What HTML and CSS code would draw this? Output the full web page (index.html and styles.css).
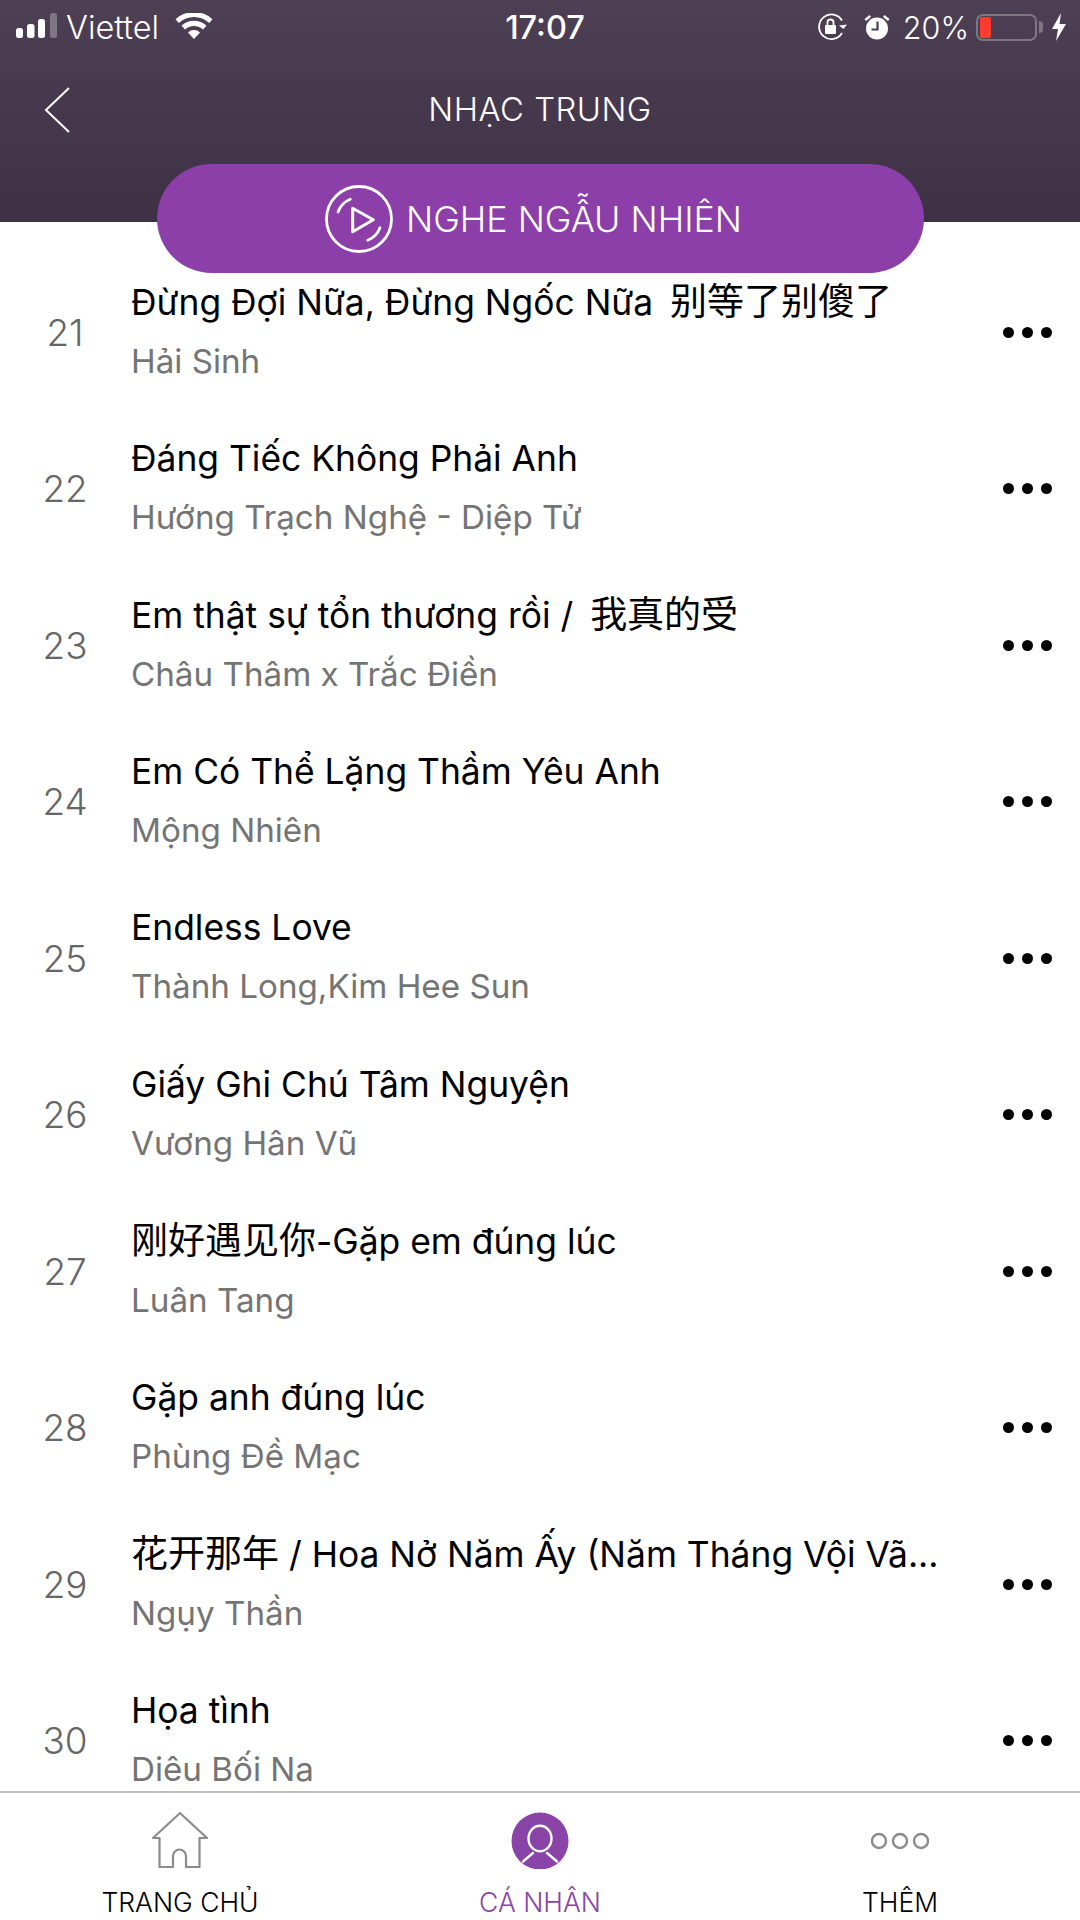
FILE: index.html
```html
<!DOCTYPE html>
<html lang="vi">
<head>
<meta charset="utf-8">
<title>Nhạc Trung</title>
<link rel="stylesheet" href="styles.css">
</head>
<body>
<div class="screen">
  <header class="header">
    <div class="status">
      <div class="status-left">
        <svg class="signal" width="44" height="28" viewBox="0 0 44 28"><rect x="1" y="15" width="7" height="10" rx="2.500" fill="#fff"/><rect x="12" y="11" width="7.500" height="14" rx="2.500" fill="#fff"/><rect x="23" y="6" width="7" height="19" rx="2.500" fill="#fff"/><rect x="35" y="0" width="7" height="25" rx="2.500" fill="#7e7685"/></svg>
        <span class="carrier">Viettel</span>
        <svg class="wifi" width="38" height="28" viewBox="0 0 38 28"><path d="M19 26l-6-6.500a8.500 8.500 0 0 1 12 0zM10 16.500l-3.500-3.800a18 18 0 0 1 25 0L28 16.500a13 13 0 0 0-18 0zM3.800 10L0.500 6.300a27 27 0 0 1 37 0L34.200 10a22 22 0 0 0-30.400 0z" fill="#fff"/></svg>
      </div>
      <span class="time">17:07</span>
      <div class="status-right">
        <svg width="30" height="28" viewBox="0 0 30 28" fill="none"><path d="M25 7.500A12.300 12.300 0 1 0 25 20" stroke="#fff" stroke-width="1.800"/><path d="M22 12.500l4.500 3.500 3.500-4.500z" fill="#fff"/><rect x="8" y="12" width="11" height="9" rx="1" fill="#fff"/><path d="M10.500 12V9.500a3 3 0 0 1 6 0V12" stroke="#fff" stroke-width="1.800"/></svg>
        <svg class="alarm" width="26" height="28" viewBox="0 0 26 28"><circle cx="13" cy="15.500" r="11" fill="#fff"/><path d="M0.500 6l5-4 1.500 2-5 4zM25.500 6l-5-4-1.500 2 5 4z" fill="#fff"/><path d="M13.500 8.500v8H7.500" stroke="#4a3d51" stroke-width="2.200" fill="none"/></svg>
        <span class="percent">20%</span>
        <div class="battery"><span class="battery-fill"></span></div>
        <span class="battery-tip"></span>
        <svg width="16" height="28" viewBox="0 0 16 28"><path d="M10 0L1 16h6l-2 12 10-17H8.500z" fill="#fff"/></svg>
      </div>
    </div>
    <div class="navbar">
      <svg class="back" width="26" height="46" viewBox="0 0 26 46" fill="none"><path d="M25 1L2 23l23 22" stroke="#fff" stroke-width="2"/></svg>
      <h1 class="title">NHẠC TRUNG</h1>
    </div>
    <button class="shuffle">
      <svg width="68" height="68" viewBox="0 0 68 68" fill="none" stroke="#fff" stroke-linecap="round" stroke-linejoin="round" stroke-width="2.800"><circle cx="34" cy="34" r="32.500"/><path d="M13 27A22 22 0 0 1 25.300 14.300M42.700 55.300A22 22 0 0 0 55 42.700"/><path d="M27.700 23.300v23.400l20.600-12z" stroke-width="3"/></svg>
      <span>NGHE NGẪU NHIÊN</span>
    </button>
  </header>

  <main class="list">
    <div class="track"><span class="num">21</span><div class="info"><div class="name">Đừng Đợi Nữa, Đừng Ngốc Nữa <span class="cjk cjk-after">别等了别傻了</span></div><div class="artist">Hải Sinh</div></div><div class="more"><i></i><i></i><i></i></div></div>
    <div class="track"><span class="num">22</span><div class="info"><div class="name">Đáng Tiếc Không Phải Anh</div><div class="artist">Hướng Trạch Nghệ - Diệp Tử</div></div><div class="more"><i></i><i></i><i></i></div></div>
    <div class="track"><span class="num">23</span><div class="info"><div class="name">Em thật sự tổn thương rồi / <span class="cjk cjk-after">我真的受</span></div><div class="artist">Châu Thâm x Trắc Điền</div></div><div class="more"><i></i><i></i><i></i></div></div>
    <div class="track"><span class="num">24</span><div class="info"><div class="name">Em Có Thể Lặng Thầm Yêu Anh</div><div class="artist">Mộng Nhiên</div></div><div class="more"><i></i><i></i><i></i></div></div>
    <div class="track"><span class="num">25</span><div class="info"><div class="name">Endless Love</div><div class="artist">Thành Long,Kim Hee Sun</div></div><div class="more"><i></i><i></i><i></i></div></div>
    <div class="track"><span class="num">26</span><div class="info"><div class="name">Giấy Ghi Chú Tâm Nguyện</div><div class="artist">Vương Hân Vũ</div></div><div class="more"><i></i><i></i><i></i></div></div>
    <div class="track"><span class="num">27</span><div class="info"><div class="name"><span class="cjk">刚好遇见你</span>-Gặp em đúng lúc</div><div class="artist">Luân Tang</div></div><div class="more"><i></i><i></i><i></i></div></div>
    <div class="track"><span class="num">28</span><div class="info"><div class="name">Gặp anh đúng lúc</div><div class="artist">Phùng Đề Mạc</div></div><div class="more"><i></i><i></i><i></i></div></div>
    <div class="track"><span class="num">29</span><div class="info"><div class="name"><span class="cjk">花开那年</span> / Hoa Nở Năm Ấy (Năm Tháng Vội Vã...</div><div class="artist">Ngụy Thần</div></div><div class="more"><i></i><i></i><i></i></div></div>
    <div class="track"><span class="num">30</span><div class="info"><div class="name">Họa tình</div><div class="artist">Diêu Bối Na</div></div><div class="more"><i></i><i></i><i></i></div></div>
  </main>

  <nav class="tabs">
    <div class="tab">
      <svg width="58" height="58" viewBox="0 0 58 58" fill="none" stroke="#8c8c8c" stroke-width="2.200" stroke-linejoin="round"><path d="M29 2L2 27h6.500v29H22V45a6.500 6.500 0 0 1 13 0v11h13.500V27H56z"/></svg>
      <span>TRANG CHỦ</span>
    </div>
    <div class="tab tab-active">
      <svg width="58" height="58" viewBox="0 0 58 58" fill="none" stroke="#fff" stroke-width="2.400" stroke-linecap="round"><circle cx="29" cy="30" r="28.500" fill="#8a44a8" stroke="none"/><ellipse cx="29" cy="27.500" rx="11.500" ry="12.800"/><path d="M22 42l-10 8.500M36 42l10 8.500"/></svg>
      <span>CÁ NHÂN</span>
    </div>
    <div class="tab">
      <svg width="58" height="58" viewBox="0 0 58 58" fill="none" stroke="#8c8c8c" stroke-width="2.400"><circle cx="8" cy="30" r="7"/><circle cx="29" cy="30" r="7"/><circle cx="50" cy="30" r="7"/></svg>
      <span>THÊM</span>
    </div>
  </nav>
</div>
</body>
</html>
```

FILE: styles.css
```css
* { box-sizing: border-box; }
html, body { margin: 0; padding: 0; background: #fff; }
body { font-family: Inter, "Noto Sans CJK SC", sans-serif; }
.screen { width: 1080px; height: 1920px; display: flex; flex-direction: column; overflow: hidden; position: relative; }

.header { height: 222px; flex: none; background: linear-gradient(#4d3f54, #3f3145); color: #fff; position: relative; z-index: 2; }
.status { height: 54px; padding: 0 13px 0 15px; display: grid; grid-template-columns: 1fr auto 1fr; align-items: center; }
.status-left { display: flex; align-items: center; gap: 7px; }
.carrier { font-size: 32.500px; font-weight: 300; }
.wifi { margin-left: 9px; }
.time { font-size: 32.500px; font-weight: 500; margin-left: 8px; }
.status-right { display: flex; align-items: center; justify-content: flex-end; }
.status-right .alarm { margin-left: 17px; }
.percent { font-size: 30.500px; font-weight: 300; margin: 0 7px 0 13px; }
.battery { width: 61px; height: 27px; border: 2.500px solid #7e7685; border-radius: 7px; padding: 1px 0 1px 2px; }
.battery-fill { display: block; width: 11px; height: 100%; background: #ff3b30; border-radius: 2px; }
.battery-tip { width: 4px; height: 12px; background: #7e7685; border-radius: 0 4px 4px 0; margin: 0 8px 0 2px; }

.navbar { height: 56px; margin-top: 27px; position: relative; display: flex; align-items: center; justify-content: center; }
.back { position: absolute; left: 44px; top: 6px; }
.title { margin: 0; font-size: 32.800px; font-weight: 300; letter-spacing: 0.500px; }

.shuffle { position: absolute; left: 157px; top: 164px; width: 767px; height: 109px; border: 0; border-radius: 55px; background: #8c3ea9; color: #fff; font: 300 35.800px Inter, sans-serif; display: flex; align-items: center; justify-content: center; gap: 13px; padding: 0 14px 0 0; }

.list { flex: 1; min-height: 0; overflow: hidden; padding-top: 32px; }
.track { height: 156.500px; display: flex; align-items: center; padding: 0 28px 0 0; }
.num { width: 130px; flex: none; text-align: center; font-size: 36.800px; font-weight: 300; color: #666; }
.info { flex: 1; min-width: 0; padding: 0 0 4px 1px; }
.name { font-size: 35.400px; line-height: 44px; color: #000; white-space: nowrap; }
.cjk { font-size: 37px; }
.cjk-after { margin-left: 7px; }
.artist { font-size: 33.200px; line-height: 40px; margin-top: 16px; color: #747474; white-space: nowrap; }
.more { display: flex; gap: 8px; flex: none; }
.more i { width: 11px; height: 11px; border-radius: 50%; background: #000; }

.tabs { height: 129px; flex: none; border-top: 2px solid #bdbdbd; background: #fff; display: flex; }
.tab { flex: 1; display: flex; flex-direction: column; align-items: center; padding-top: 18px; gap: 17px; font-size: 26.500px; font-weight: 300; color: #000; }
.tab-active { color: #8a44a8; }
```
